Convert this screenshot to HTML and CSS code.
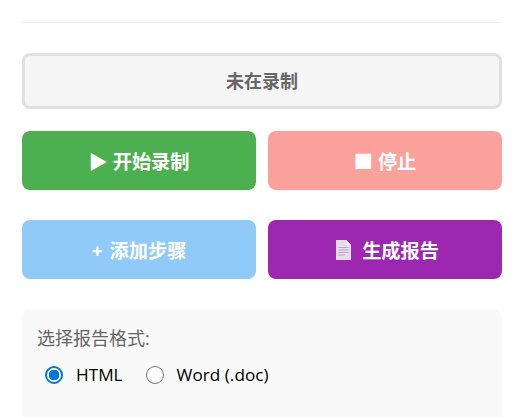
FILE: index.html
```html
<!DOCTYPE html>
<html lang="en">
<head>
    <meta charset="UTF-8">
    <meta name="viewport" content="width=device-width, initial-scale=1.0">
    <title>录制</title>
    <link rel="stylesheet" href="styles.css">
</head>
<body>
    <div class="container">
        <hr class="divider">

        <!-- Status -->
        <div class="status">未在录制</div>

        <!-- Controls -->
        <div class="button-row">
            <button class="btn btn-start" type="button">▶ 开始录制</button>
            <button class="btn btn-stop" type="button">■ 停止</button>
        </div>
        <div class="button-row">
            <button class="btn btn-add" type="button">+ 添加步骤</button>
            <button class="btn btn-report" type="button">
                <svg class="doc-icon" viewBox="0 0 15 20" width="15" height="20" aria-hidden="true">
                    <path d="M0 0H10L15 5V20H0Z" fill="#e6dcee"/>
                    <path d="M10 0L15 5H10Z" fill="#f6f1f9"/>
                    <path d="M2.500 7.500H12.500M2.500 10H12.500M2.500 12.500H12.500M2.500 15H9" stroke="#b9a9c6" stroke-width="1" fill="none"/>
                </svg>
                生成报告
            </button>
        </div>

        <!-- Report format -->
        <div class="format-panel">
            <div class="format-title">选择报告格式:</div>
            <div class="format-options">
                <label class="format-option"><input type="radio" name="format" checked> HTML</label>
                <label class="format-option"><input type="radio" name="format"> Word (.doc)</label>
            </div>
        </div>
    </div>
</body>
</html>
```

FILE: styles.css
```css
html, body {
    height: 100%;
    overflow: hidden;
}

body {
    font-family: "Open Sans", "Noto Sans CJK SC", sans-serif;
    background-color: #fff;
    margin: 0;
    padding: 0;
}

.container {
    padding: 22px 14px 0 22px;
}

.divider {
    border: none;
    border-top: 1px solid #eee;
    margin: 0 0 30px;
}

.status {
    background-color: #f5f5f5;
    border: 3px solid #e0e0e0;
    border-radius: 8px;
    color: #666;
    font-size: 18px;
    font-weight: bold;
    line-height: 26px;
    padding: 12px;
    text-align: center;
    margin-bottom: 22px;
}

.button-row {
    display: grid;
    grid-template-columns: 1fr 1fr;
    gap: 12px;
    margin-bottom: 30px;
}

.btn {
    border: none;
    border-radius: 8px;
    color: #fff;
    font-family: inherit;
    font-size: 19.2px;
    font-weight: bold;
    height: 59px;
    padding: 0;
    display: flex;
    align-items: center;
    justify-content: center;
}

.btn-start {
    background-color: #4caf50;
}

.btn-stop {
    background-color: #faa19b;
}

.btn-add {
    background-color: #90caf9;
    word-spacing: 2px;
}

.btn-report {
    background-color: #9c27b0;
    padding-left: 5px;
    gap: 11px;
}

.doc-icon {
    flex: none;
}

.format-panel {
    background-color: #f9f9f9;
    border-radius: 8px;
    padding: 15px;
    height: 120px;
}

.format-title {
    color: #666;
    font-size: 18px;
    line-height: 28px;
    margin-bottom: 11px;
}

.format-options {
    display: flex;
    gap: 23px;
    padding-left: 8px;
}

.format-option {
    display: flex;
    align-items: center;
    gap: 13px;
    color: #000;
    font-size: 17.2px;
    line-height: 24px;
}

.format-option input {
    appearance: none;
    box-sizing: border-box;
    width: 18px;
    height: 18px;
    margin: 0;
    background-color: #fff;
    border: 1.5px solid #767676;
    border-radius: 50%;
}

.format-option input:checked {
    border: 2px solid #0078d4;
    background: radial-gradient(circle, #0078d4 0, #0078d4 5px, #fff 5.6px);
}
```
